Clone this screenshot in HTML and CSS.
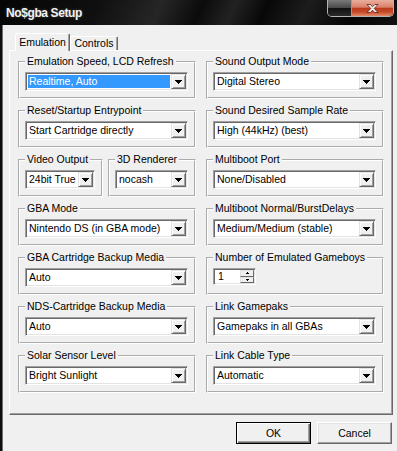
FILE: index.html
```html
<!DOCTYPE html>
<html>
<head>
  <title>No$gba Setup</title>
  <link rel="stylesheet" href="styles.css">
</head>
<body>
  <div class="window">
    <div class="titlebar">
      <div class="title">No$gba Setup</div>
      <div class="caption-btns">
        <div class="cap-max"></div>
        <div class="cap-close">
          <svg width="13" height="9" viewBox="0 0 13 9">
            <path d="M1 0.5h3.2l2.3 2.3 2.3-2.3h3.2l-3.8 4 3.8 4h-3.2l-2.3-2.3-2.3 2.3h-3.2l3.8-4z" fill="#f4f4f4" stroke="#5a1a10" stroke-width="0.8"/>
          </svg>
        </div>
      </div>
    </div>

    <div class="client">
      <div class="tabs">
        <div class="tab active">Emulation</div>
        <div class="tab">Controls</div>
      </div>

      <div class="panel">
        <fieldset class="grp">
          <legend>Emulation Speed, LCD Refresh</legend>
          <div class="combo"><span class="val sel">Realtime, Auto</span><span class="drop"><i class="arrow"></i></span></div>
        </fieldset>
        <fieldset class="grp">
          <legend>Sound Output Mode</legend>
          <div class="combo"><span class="val">Digital Stereo</span><span class="drop"><i class="arrow"></i></span></div>
        </fieldset>

        <fieldset class="grp">
          <legend>Reset/Startup Entrypoint</legend>
          <div class="combo"><span class="val">Start Cartridge directly</span><span class="drop"><i class="arrow"></i></span></div>
        </fieldset>
        <fieldset class="grp">
          <legend>Sound Desired Sample Rate</legend>
          <div class="combo"><span class="val">High (44kHz) (best)</span><span class="drop"><i class="arrow"></i></span></div>
        </fieldset>

        <div class="pair">
          <fieldset class="grp video">
            <legend>Video Output</legend>
            <div class="combo"><span class="val">24bit True</span><span class="drop"><i class="arrow"></i></span></div>
          </fieldset>
          <fieldset class="grp render">
            <legend>3D Renderer</legend>
            <div class="combo"><span class="val">nocash</span><span class="drop"><i class="arrow"></i></span></div>
          </fieldset>
        </div>
        <fieldset class="grp">
          <legend>Multiboot Port</legend>
          <div class="combo"><span class="val">None/Disabled</span><span class="drop"><i class="arrow"></i></span></div>
        </fieldset>

        <fieldset class="grp">
          <legend>GBA Mode</legend>
          <div class="combo"><span class="val">Nintendo DS (in GBA mode)</span><span class="drop"><i class="arrow"></i></span></div>
        </fieldset>
        <fieldset class="grp">
          <legend>Multiboot Normal/BurstDelays</legend>
          <div class="combo"><span class="val">Medium/Medium (stable)</span><span class="drop"><i class="arrow"></i></span></div>
        </fieldset>

        <fieldset class="grp">
          <legend>GBA Cartridge Backup Media</legend>
          <div class="combo"><span class="val">Auto</span><span class="drop"><i class="arrow"></i></span></div>
        </fieldset>
        <fieldset class="grp">
          <legend>Number of Emulated Gameboys</legend>
          <div class="spin">
            <span class="val">1</span>
            <span class="spin-btns">
              <span class="spin-up"><i class="tiny up"></i></span>
              <span class="spin-down"><i class="tiny down"></i></span>
            </span>
          </div>
        </fieldset>

        <fieldset class="grp">
          <legend>NDS-Cartridge Backup Media</legend>
          <div class="combo"><span class="val">Auto</span><span class="drop"><i class="arrow"></i></span></div>
        </fieldset>
        <fieldset class="grp">
          <legend>Link Gamepaks</legend>
          <div class="combo"><span class="val">Gamepaks in all GBAs</span><span class="drop"><i class="arrow"></i></span></div>
        </fieldset>

        <fieldset class="grp">
          <legend>Solar Sensor Level</legend>
          <div class="combo"><span class="val">Bright Sunlight</span><span class="drop"><i class="arrow"></i></span></div>
        </fieldset>
        <fieldset class="grp">
          <legend>Link Cable Type</legend>
          <div class="combo"><span class="val">Automatic</span><span class="drop"><i class="arrow"></i></span></div>
        </fieldset>
      </div>

      <div class="actions">
        <button class="btn default">OK</button>
        <button class="btn">Cancel</button>
      </div>
    </div>
  </div>
</body>
</html>
```

FILE: styles.css
```css
* {
  box-sizing: border-box;
}

body {
  margin: 0;
  width: 397px;
  height: 451px;
  overflow: hidden;
  font-family: "Liberation Sans", Arial, sans-serif;
  font-size: 10.5px;
  color: #000;
  background-color: #f0f0f0;
}

.window {
  display: flex;
  flex-direction: column;
  height: 451px;
  background-color: #f0f0f0;
}

/* title bar */
.titlebar {
  height: 25px;
  display: flex;
  align-items: flex-start;
  background: linear-gradient(115deg, #050505 0%, #101010 25%, #262626 40%, #0b0b0b 50%, #222 58%, #080808 66%, #1c1c1c 76%, #060606 88%, #121212 100%);
}

.title {
  margin: 6px 0 0 6px;
  font: bold 12px/14px "Liberation Sans", Arial, sans-serif;
  letter-spacing: -0.4px;
  color: #f2f2f2;
  text-shadow: 0 0 3px rgba(255, 255, 255, 0.25);
}

.caption-btns {
  margin-left: auto;
  margin-right: 3px;
  display: flex;
  height: 17px;
  border: 1px solid #b4b4b4;
  border-top: 0;
  border-radius: 0 0 5px 5px;
  overflow: hidden;
}

.cap-max {
  width: 24px;
  background: linear-gradient(#7a7a7a, #4a4a4a 48%, #111 52%, #2a2a2a);
  border-right: 1px solid #9a9a9a;
}

.cap-close {
  width: 41px;
  display: flex;
  align-items: center;
  justify-content: center;
  background: linear-gradient(#eaae9d, #d9806a 45%, #bb3a1b 52%, #c64a2b 75%, #e38a68);
}

/* client area */
.client {
  flex: 1;
  display: flex;
  flex-direction: column;
  border-left: 2px solid #0e0e0e;
  box-shadow: inset 1px 0 #707070;
  padding: 8px 4px 0 7px;
}

.tabs {
  display: flex;
  align-items: flex-end;
  height: 17px;
  padding-left: 6px;
}

.tab {
  width: 48px;
  height: 14px;
  line-height: 13px;
  text-align: center;
  border: 1px solid;
  border-color: #fff #696969 transparent #fff;
  border-bottom: 0;
  border-radius: 2px 2px 0 0;
  box-shadow: inset -1px 0 #a0a0a0;
}

.tab.active {
  width: 55px;
  height: 18px;
  padding-top: 2px;
  margin-bottom: -1px;
  position: relative;
  z-index: 1;
  background-color: #f0f0f0;
}

.panel {
  height: 365px;
  border: 1px solid;
  border-color: #fff #696969 #696969 #fff;
  box-shadow: inset -1px -1px #a0a0a0;
  padding: 4px 8px 0 8px;
  display: grid;
  grid-template-columns: 178px 178px;
  grid-template-rows: repeat(7, 44px);
  column-gap: 10px;
  row-gap: 5px;
  align-content: start;
}

/* group boxes */
.grp {
  margin: 0;
  min-width: 0;
  border: 2px groove #fff;
  padding: 4px 6px 6px 5px;
}

.grp legend {
  padding: 0 2px;
  line-height: 13px;
  white-space: nowrap;
}

.pair {
  display: flex;
  gap: 5px;
}

.pair .video {
  width: 85px;
}

.pair .render {
  width: 88px;
}

/* combo box */
.combo,
.spin {
  display: flex;
  height: 19px;
  padding: 1px;
  background-color: #fff;
  border: 1px solid;
  border-color: #a0a0a0 #fff #fff #a0a0a0;
  box-shadow: inset 1px 1px #696969, inset -1px -1px #e3e3e3;
}

.val {
  flex: 1;
  margin: 1px;
  padding-left: 1px;
  line-height: 13px;
  white-space: nowrap;
  overflow: hidden;
}

.val.sel {
  background-color: #3399ff;
  color: #fff;
}

.drop {
  width: 15px;
  display: flex;
  align-items: center;
  justify-content: center;
  padding-top: 1px;
  background-color: #f0f0f0;
  border: 1px solid;
  border-color: #e3e3e3 #696969 #696969 #e3e3e3;
  box-shadow: inset 1px 1px #fff, inset -1px -1px #a0a0a0;
}

.arrow {
  width: 7px;
  height: 4px;
  background:
    linear-gradient(#000, #000) 0 0 / 7px 1px no-repeat,
    linear-gradient(#000, #000) 1px 1px / 5px 1px no-repeat,
    linear-gradient(#000, #000) 2px 2px / 3px 1px no-repeat,
    linear-gradient(#000, #000) 3px 3px / 1px 1px no-repeat;
}

/* spin box */
.spin {
  width: 43px;
  height: 17px;
}

.spin .val {
  margin: 0 1px;
  padding-left: 2px;
}

.spin-btns {
  width: 14px;
  display: flex;
  flex-direction: column;
}

.spin-up,
.spin-down {
  flex: 1;
  display: flex;
  align-items: center;
  justify-content: center;
  background-color: #f0f0f0;
  border: 1px solid;
  border-color: #e3e3e3 #696969 #696969 #e3e3e3;
}

.tiny {
  width: 3px;
  height: 2px;
}

.tiny.up {
  background:
    linear-gradient(#000, #000) 1px 0 / 1px 1px no-repeat,
    linear-gradient(#000, #000) 0 1px / 3px 1px no-repeat;
}

.tiny.down {
  background:
    linear-gradient(#000, #000) 0 0 / 3px 1px no-repeat,
    linear-gradient(#000, #000) 1px 1px / 1px 1px no-repeat;
}

/* dialog buttons */
.actions {
  display: flex;
  justify-content: flex-end;
  gap: 6px;
  margin-top: 7px;
  padding-right: 1px;
}

.btn {
  width: 75px;
  height: 22px;
  margin: 0;
  padding: 0;
  font: 10.5px "Liberation Sans", Arial, sans-serif;
  color: #000;
  background-color: #f0f0f0;
  border: 1px solid;
  border-color: #fff #696969 #696969 #fff;
  box-shadow: inset -1px -1px #a0a0a0, inset 1px 1px #e3e3e3;
}

.btn.default {
  border: 1px solid #000;
  box-shadow: inset 1px 1px #fff, inset -1px -1px #696969, inset -2px -2px #a0a0a0;
}
```
